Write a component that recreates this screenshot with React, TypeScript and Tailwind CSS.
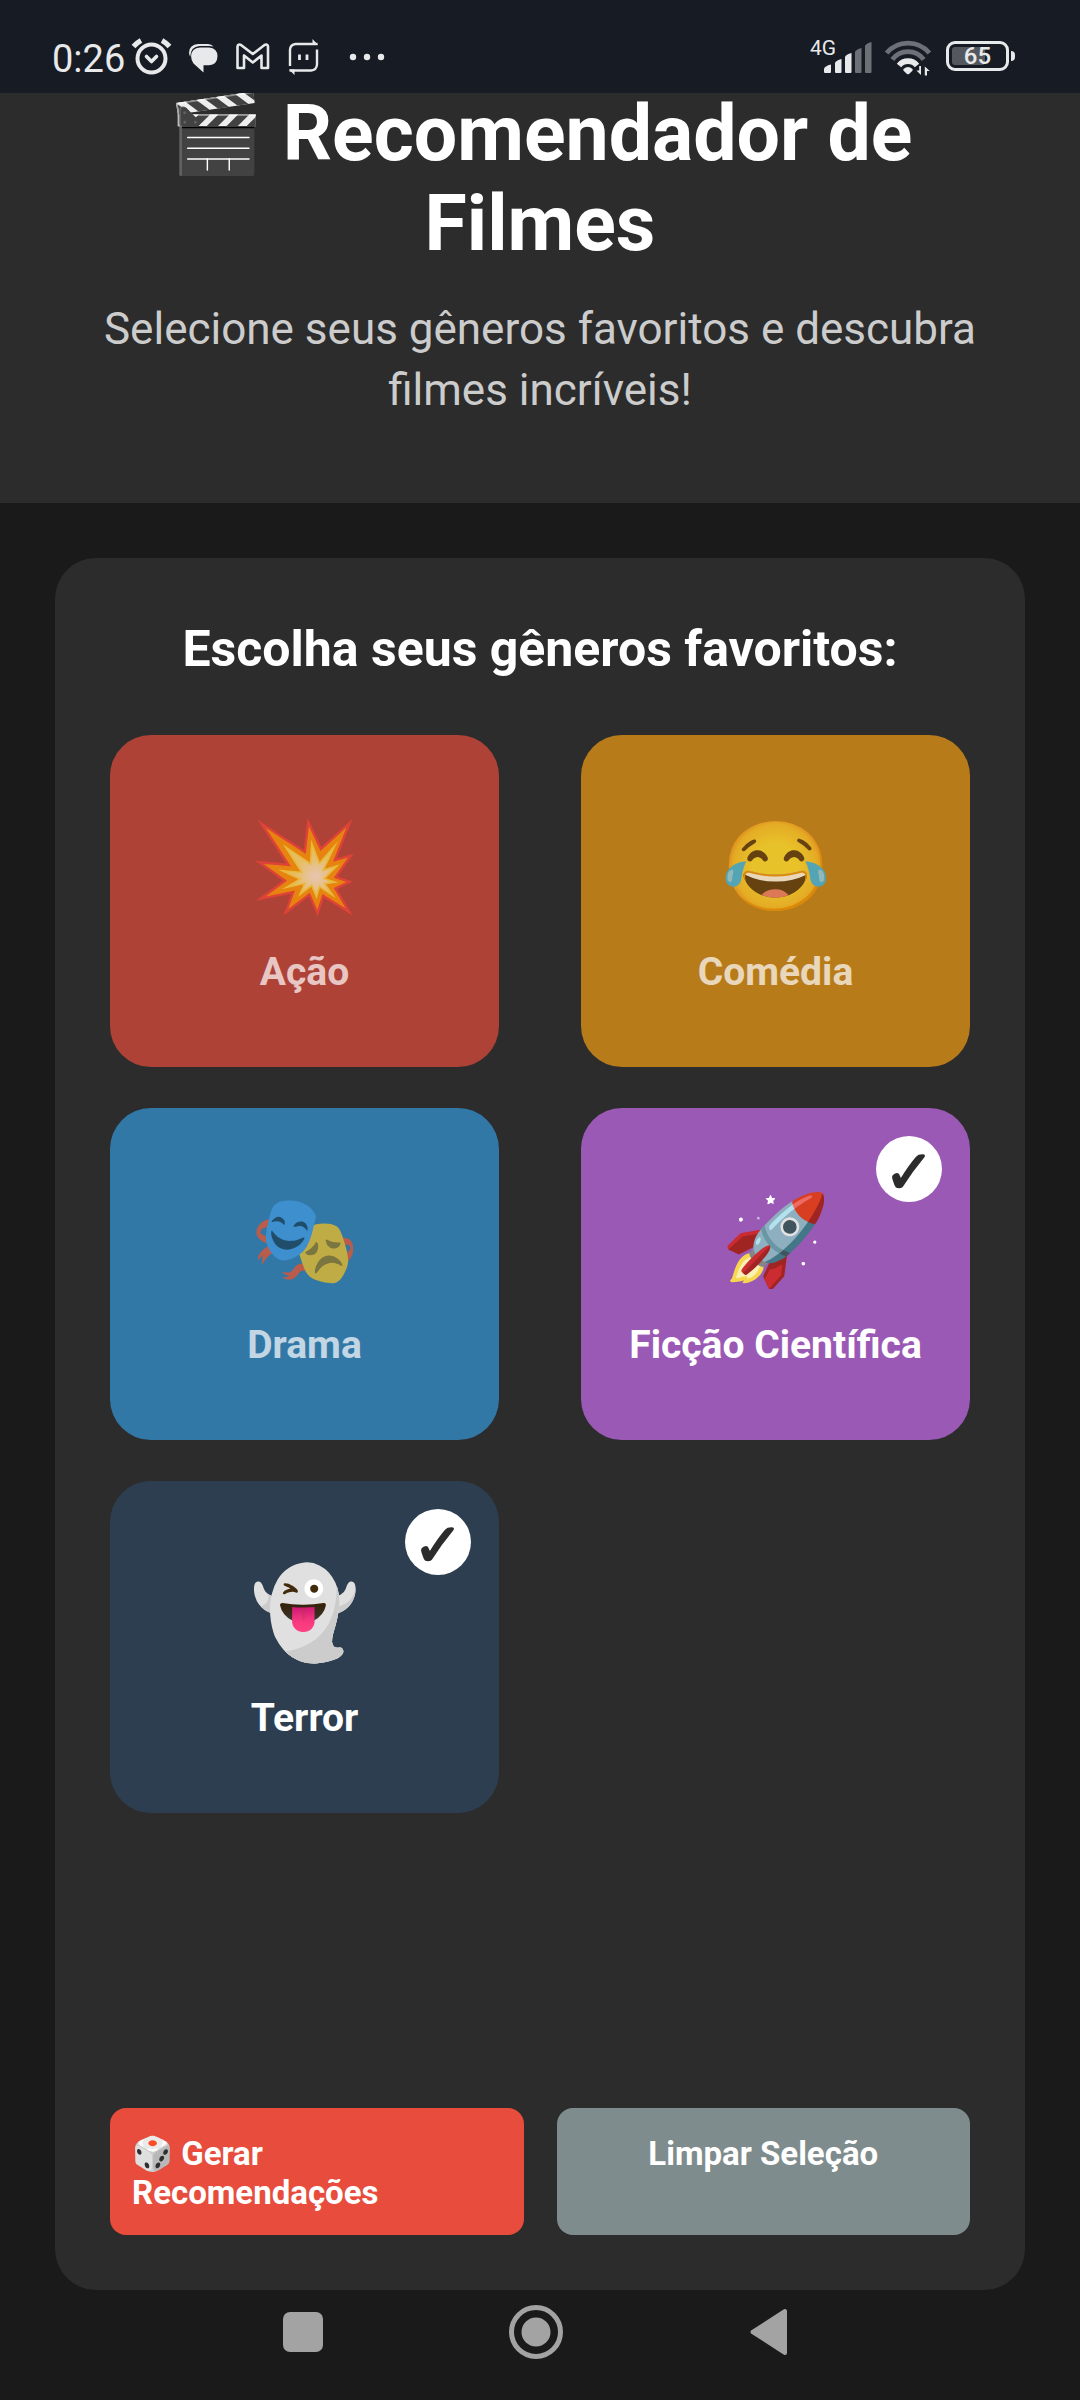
import { useState } from 'react';

type Genre = { id: string; emoji: string; label: string; color: string; dimmed: string };

const GENRES: Genre[] = [
  { id: 'acao', emoji: '💥', label: 'Ação', color: 'bg-[#e74c3c]', dimmed: 'bg-[#e74c3c]/70' },
  { id: 'comedia', emoji: '😂', label: 'Comédia', color: 'bg-[#f39c12]', dimmed: 'bg-[#f39c12]/70' },
  { id: 'drama', emoji: '🎭', label: 'Drama', color: 'bg-[#3498db]', dimmed: 'bg-[#3498db]/70' },
  { id: 'ficcao', emoji: '🚀', label: 'Ficção Científica', color: 'bg-[#9b59b6]', dimmed: 'bg-[#9b59b6]/70' },
  { id: 'terror', emoji: '👻', label: 'Terror', color: 'bg-[#2c3e50]', dimmed: 'bg-[#2c3e50]/70' },
];

function AlarmIcon() {
  return (
    <svg className="h-10 w-[41px]" viewBox="131 36 41 40" fill="none" stroke="#e8e9ea" aria-hidden="true">
      <circle cx="151.5" cy="58.5" r="14" strokeWidth="4" />
      <path d="M146.500 56.500l5 5 5-5" strokeWidth="3.600" strokeLinecap="round" strokeLinejoin="round" />
      <path d="M133.500 46.500Q136.500 43 141 40.500M169.500 46.500Q166.500 43 162 40.500" strokeWidth="5" />
    </svg>
  );
}

function ChatIcon() {
  return (
    <svg className="h-10 w-[30px]" viewBox="188 36 30 40" fill="#e8e9ea" aria-hidden="true">
      <path d="M198 44h10q3.500 0 5.500 2.600q-2-.6-4-.6h-10q-9 .6-9.200 10.500Q189 54.500 189 52.500Q189.500 44.500 198 44z" />
      <path d="M200 47.500h9q8.300.4 8.500 8.800q-.2 8.600-8.500 8.900h-5.500v7.300l-10-9q-2.400-3.300-2.400-7.200q.3-8.400 8.900-8.800z" />
    </svg>
  );
}

function MailIcon() {
  return (
    <svg className="h-10 w-9" viewBox="234 36 36 40" fill="none" stroke="#e8e9ea" strokeWidth="2.600" strokeLinejoin="round" aria-hidden="true">
      <path d="M237.500 68V46.500Q238 43.500 241 45L252.800 54L264.500 45Q267.500 43.500 268 46.500V68H261.500V55.500L252.800 62.500L244 55.500V68z" />
    </svg>
  );
}

function RobotIcon() {
  return (
    <svg className="h-10 w-[34px]" viewBox="286 36 34 40" fill="none" stroke="#e8e9ea" strokeWidth="2.400" aria-hidden="true">
      <path d="M290 66V49.500Q290.500 44.500 295.500 44H317.500M317 49.500V64.500Q316.500 70.200 311 70.500H289.500" />
      <path d="M312.500 39l5.500 6h-5.500zM294.500 75l-5.500-5.500h5.500z" fill="#e8e9ea" stroke="none" />
      <path d="M299.500 54.500v5.500M307 54.500v5.500" strokeWidth="2.800" />
    </svg>
  );
}

function DotsIcon() {
  return (
    <svg className="h-10 w-[50px]" viewBox="336 36 50 40" fill="#e8e9ea" aria-hidden="true">
      <circle cx="353" cy="57" r="3.200" />
      <circle cx="367" cy="57" r="3.200" />
      <circle cx="381" cy="57" r="3.200" />
    </svg>
  );
}

function SignalIcon() {
  return (
    <svg className="h-10 w-12" viewBox="824 36 48 40" aria-hidden="true">
      <path fill="#e8e9ea" d="M824 69q.5-3 7-4.500V72q0 1-1 1h-5q-1 0-1-1zM835 63q1-2.500 6.500-4V72q0 1-1 1H836q-1 0-1-1zM845 57q1-2.500 6.500-4V72q0 1-1 1H846q-1 0-1-1z" />
      <path fill="#6d7076" d="M855 52q1-2.500 6.500-4V72q0 1-1 1H856q-1 0-1-1zM865 46q1-2.500 6.500-4V72q0 1-1 1H866q-1 0-1-1z" />
    </svg>
  );
}

function WifiIcon() {
  return (
    <svg className="h-10 w-12" viewBox="884 36 48 40" fill="none" aria-hidden="true">
      <path d="M886.600 53A28 28 0 0 1 929.400 53" stroke="#6d7076" strokeWidth="4.800" />
      <path d="M892.300 59.500A19.500 19.500 0 0 1 923.700 59.500" stroke="#6d7076" strokeWidth="4.800" />
      <path d="M899 65.500A11.500 11.500 0 0 1 917 65.500" stroke="#e8e9ea" strokeWidth="5.600" />
      <path d="M903.500 69q4.500-4 9 0q.6 1-.3 2l-3.200 3q-1 .7-2 0l-3.200-3q-.9-1-.3-2z" fill="#e8e9ea" />
      <path d="M921 66v9l-4.500-4.500h2.700V66zM924.800 75.500v-9l5 4.500h-2.800v4.500z" fill="#e8e9ea" />
    </svg>
  );
}

function Battery({ level }: { level: number }) {
  return (
    <div className="flex items-center gap-0.5 pl-0.5">
      <div className="relative flex h-[30px] w-[63px] items-center justify-center rounded-[9px] border-[3px] border-[#e8e9ea]">
        <div className="absolute inset-[3px]">
          <div className="h-full rounded-[3px] bg-[#54575d]" style={{ width: `${level}%` }} />
        </div>
        <span className="relative text-[24px] leading-6 font-medium">{level}</span>
      </div>
      <div className="h-2.5 w-1 rounded-r-sm bg-[#e8e9ea]" />
    </div>
  );
}

function StatusBar() {
  return (
    <div className="sticky top-0 z-10 flex h-[93px] items-center justify-between bg-[#171b23] pt-[19px] pr-[65px] pl-[52px] text-[#e8e9ea]">
      <div className="flex items-center gap-1.5">
        <time className="pt-1.5 text-[38px] leading-[46px]">0:26</time>
        <div className="flex items-center gap-4">
          <AlarmIcon />
          <ChatIcon />
          <MailIcon />
          <RobotIcon />
          <DotsIcon />
        </div>
      </div>
      <div className="flex items-center gap-3">
        <div className="flex items-start">
          <span className="-mr-3 text-[21px] leading-6">4G</span>
          <SignalIcon />
        </div>
        <WifiIcon />
        <Battery level={65} />
      </div>
    </div>
  );
}

function GenreCard({ genre, selected, onToggle }: { genre: Genre; selected: boolean; onToggle: () => void }) {
  const fade = selected ? '' : 'opacity-70';
  return (
    <button
      type="button"
      aria-pressed={selected}
      onClick={onToggle}
      className={`relative flex flex-col items-center rounded-[41px] pt-20 pb-[72px] ${selected ? genre.color : genre.dimmed}`}
    >
      <span className={`mb-[30px] text-[88px] leading-[104px] ${fade}`}>{genre.emoji}</span>
      <span className={`text-[39px] leading-[46px] font-bold ${fade}`}>{genre.label}</span>
      {selected && (
        <span className="absolute top-7 right-7 flex h-[66px] w-[66px] items-center justify-center rounded-full bg-white pt-2 text-[60px] leading-[60px] font-bold text-[#2c2c2c]">
          ✓
        </span>
      )}
    </button>
  );
}

function NavBar() {
  return (
    <nav className="flex h-[110px] items-start justify-center gap-[177px] pt-3.5 pr-2">
      <button type="button" aria-label="Recentes">
        <svg className="h-14 w-14" viewBox="0 0 56 56" fill="#a3a3a3">
          <rect x="8" y="8" width="40" height="40" rx="7" />
        </svg>
      </button>
      <button type="button" aria-label="Início">
        <svg className="h-14 w-14" viewBox="0 0 56 56">
          <circle cx="28" cy="28" r="24.500" fill="none" stroke="#a3a3a3" strokeWidth="5" />
          <circle cx="28" cy="28" r="14.500" fill="#a3a3a3" />
        </svg>
      </button>
      <button type="button" aria-label="Voltar">
        <svg className="h-14 w-14" viewBox="0 0 56 56" fill="#a3a3a3" stroke="#a3a3a3" strokeWidth="4" strokeLinejoin="round">
          <path d="M11.500 28L44 7V49z" />
        </svg>
      </button>
    </nav>
  );
}

export default function App() {
  const [selected, setSelected] = useState<string[]>(['ficcao', 'terror']);
  const toggle = (id: string) =>
    setSelected((s) => (s.includes(id) ? s.filter((x) => x !== id) : [...s, id]));

  return (
    <div className="flex min-h-screen flex-col bg-[#1a1a1a] font-[Roboto,sans-serif] text-white">
      <StatusBar />
      <header className="-mt-1 bg-[#2c2c2c] px-[55px] pb-[82px] text-center">
        <h1 className="text-[77px] leading-[90px] font-bold">🎬 Recomendador de Filmes</h1>
        <p className="mt-[30px] text-[44px] leading-[61px] text-[#cccccc]">
          Selecione seus gêneros favoritos e descubra filmes incríveis!
        </p>
      </header>
      <main className="mx-[55px] mt-[55px] flex flex-1 flex-col rounded-[41px] bg-[#2c2c2c] p-[55px]">
        <h2 className="mb-[50px] text-center text-[50px] leading-[72px] font-bold">Escolha seus gêneros favoritos:</h2>
        <div className="grid grid-cols-2 gap-x-[82px] gap-y-[41px]">
          {GENRES.map((g) => (
            <GenreCard key={g.id} genre={g} selected={selected.includes(g.id)} onToggle={() => toggle(g.id)} />
          ))}
        </div>
        <div className="mt-auto grid grid-cols-2 gap-[33px] pt-[55px] text-[33px] leading-[39px] font-bold">
          <button type="button" className="flex items-start rounded-2xl bg-[#e74c3c] px-[22px] pt-[26px] pb-[23px] text-left">
            <span className="max-w-[300px]">🎲 Gerar Recomendações</span>
          </button>
          <button
            type="button"
            onClick={() => setSelected([])}
            className="flex items-start justify-center rounded-2xl bg-[#7f8c8d] px-[22px] pt-[26px] pb-[23px]"
          >
            Limpar Seleção
          </button>
        </div>
      </main>
      <NavBar />
    </div>
  );
}
